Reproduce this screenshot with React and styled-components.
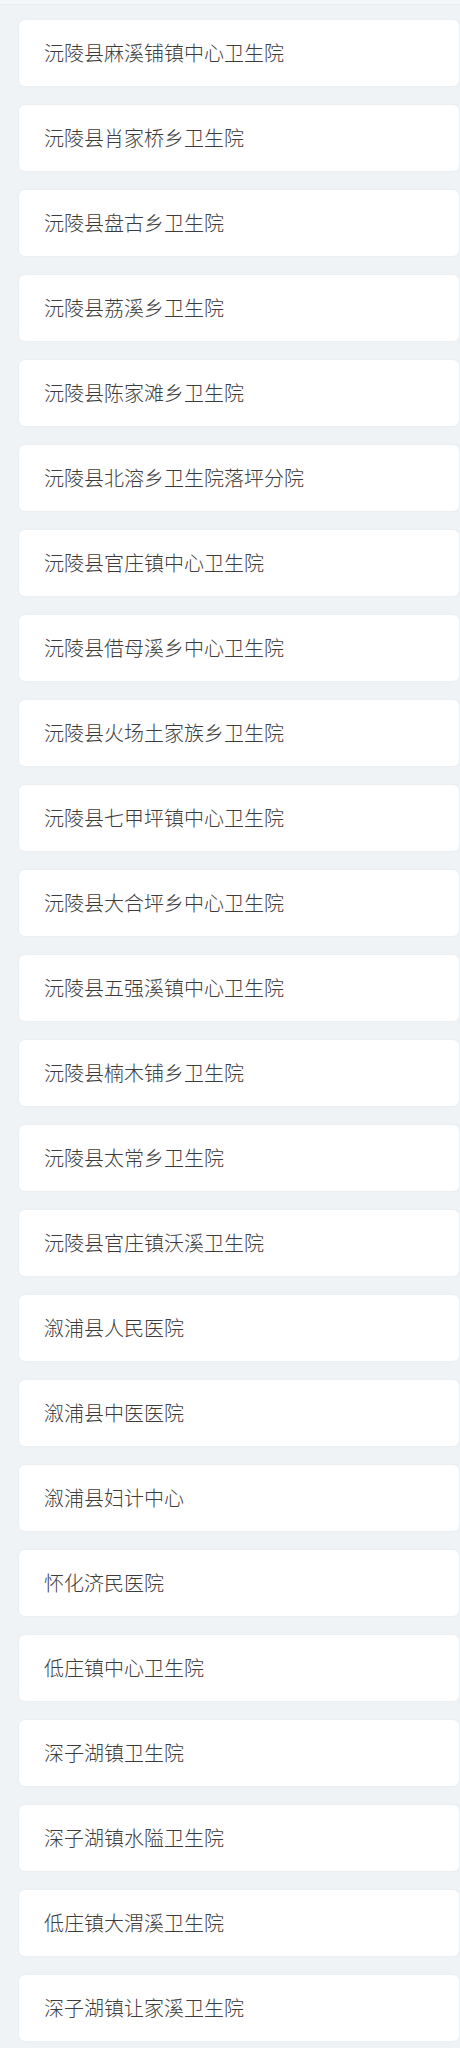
import React from "react";
import styled, { createGlobalStyle } from "styled-components";

const GlobalStyle = createGlobalStyle`
  html, body {
    margin: 0;
    padding: 0;
    background: #f0f3f6;
  }
  body {
    font-family: "Noto Sans CJK SC", "Noto Sans", sans-serif;
  }
`;

const hospitals = [
  "沅陵县麻溪铺镇中心卫生院",
  "沅陵县肖家桥乡卫生院",
  "沅陵县盘古乡卫生院",
  "沅陵县荔溪乡卫生院",
  "沅陵县陈家滩乡卫生院",
  "沅陵县北溶乡卫生院落坪分院",
  "沅陵县官庄镇中心卫生院",
  "沅陵县借母溪乡中心卫生院",
  "沅陵县火场土家族乡卫生院",
  "沅陵县七甲坪镇中心卫生院",
  "沅陵县大合坪乡中心卫生院",
  "沅陵县五强溪镇中心卫生院",
  "沅陵县楠木铺乡卫生院",
  "沅陵县太常乡卫生院",
  "沅陵县官庄镇沃溪卫生院",
  "溆浦县人民医院",
  "溆浦县中医医院",
  "溆浦县妇计中心",
  "怀化济民医院",
  "低庄镇中心卫生院",
  "深子湖镇卫生院",
  "深子湖镇水隘卫生院",
  "低庄镇大渭溪卫生院",
  "深子湖镇让家溪卫生院",
];

const App = () => {
  return (
    <>
      <GlobalStyle />
      <Page>
        <TopEdge />
        <List>
          {hospitals.map((name) => (
            <Card key={name}>{name}</Card>
          ))}
        </List>
      </Page>
    </>
  );
};

export default App;

const Page = styled.div`
  width: 460px;
  overflow: hidden;
  min-height: 2048px;
`;

const TopEdge = styled.div`
  height: 4px;
  background: #f4f6f8;
  border-bottom: 1px solid #e9edf0;
`;

const List = styled.div`
  display: flex;
  flex-direction: column;
  gap: 19px;
  padding: 15px 0 20px 19px;
`;

const Card = styled.div`
  width: 440px;
  height: 66px;
  box-sizing: border-box;
  display: flex;
  align-items: center;
  padding-left: 25px;
  background: #ffffff;
  border-radius: 6px;
  box-shadow: 0 0 3px rgba(0, 0, 0, 0.05);
  color: #3c3c3c;
  font-size: 20px;
  font-weight: 300;
  line-height: 1;
`;
